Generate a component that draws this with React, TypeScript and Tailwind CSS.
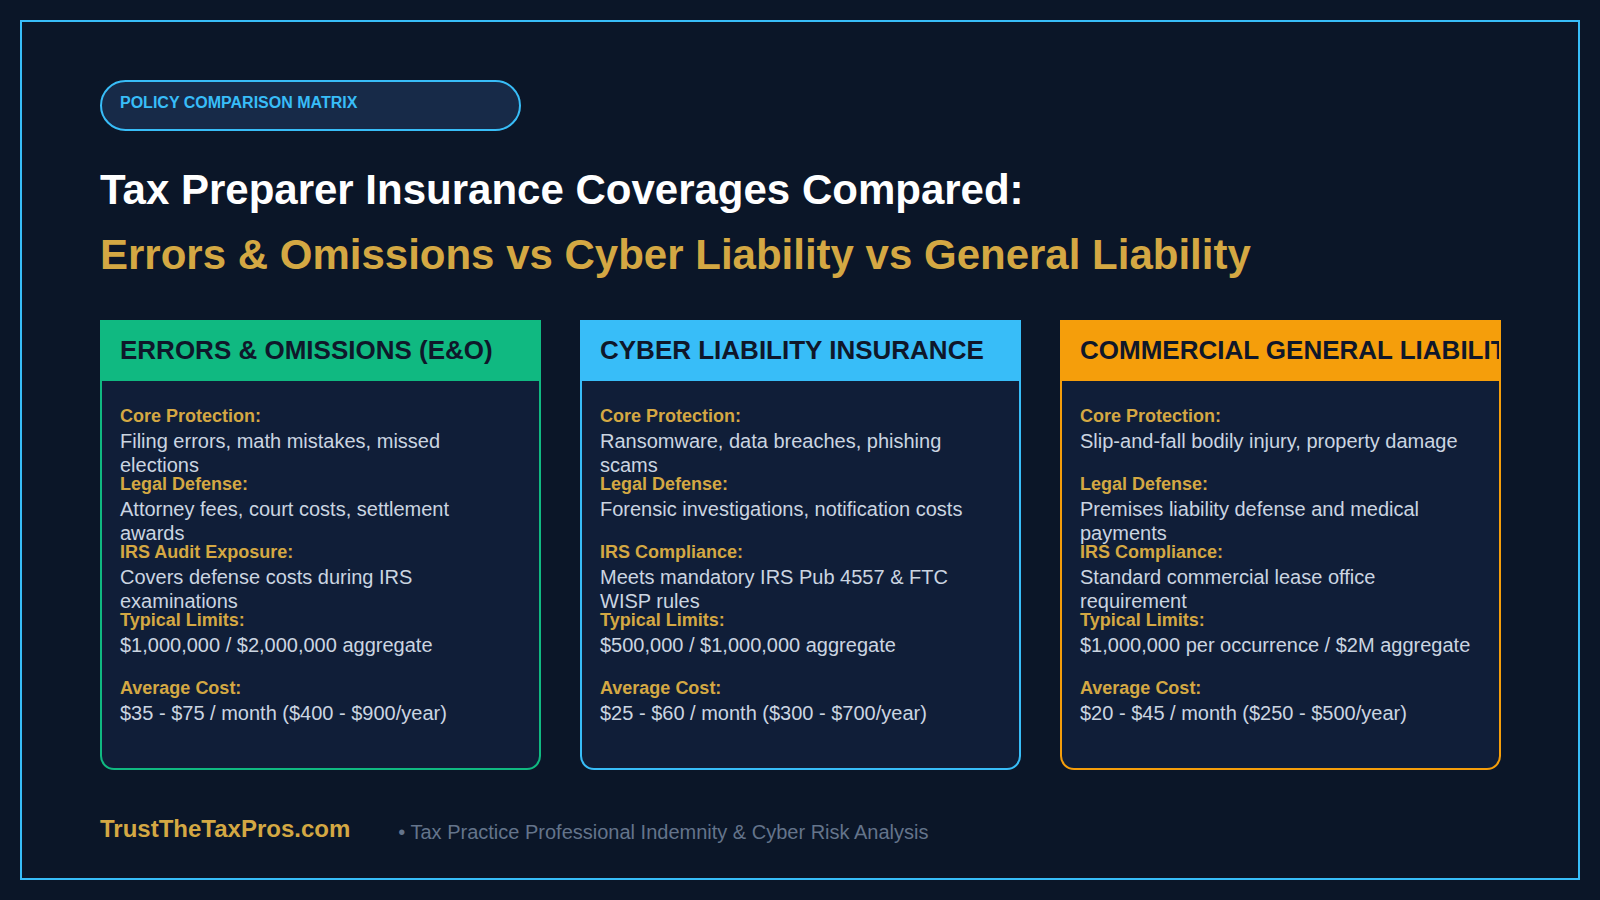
const cards = [
  {
    title: "ERRORS & OMISSIONS (E&O)",
    accent: "border-[#10b981]",
    head: "bg-[#10b981]",
    rows: [
      ["Core Protection:", "Filing errors, math mistakes, missed elections"],
      ["Legal Defense:", "Attorney fees, court costs, settlement awards"],
      ["IRS Audit Exposure:", "Covers defense costs during IRS examinations"],
      ["Typical Limits:", "$1,000,000 / $2,000,000 aggregate"],
      ["Average Cost:", "$35 - $75 / month ($400 - $900/year)"],
    ],
  },
  {
    title: "CYBER LIABILITY INSURANCE",
    accent: "border-[#38bdf8]",
    head: "bg-[#38bdf8]",
    rows: [
      ["Core Protection:", "Ransomware, data breaches, phishing scams"],
      ["Legal Defense:", "Forensic investigations, notification costs"],
      ["IRS Compliance:", "Meets mandatory IRS Pub 4557 & FTC WISP rules"],
      ["Typical Limits:", "$500,000 / $1,000,000 aggregate"],
      ["Average Cost:", "$25 - $60 / month ($300 - $700/year)"],
    ],
  },
  {
    title: "COMMERCIAL GENERAL LIABILITY (CGL)",
    accent: "border-[#f59e0b]",
    head: "bg-[#f59e0b]",
    rows: [
      ["Core Protection:", "Slip-and-fall bodily injury, property damage"],
      ["Legal Defense:", "Premises liability defense and medical payments"],
      ["IRS Compliance:", "Standard commercial lease office requirement"],
      ["Typical Limits:", "$1,000,000 per occurrence / $2M aggregate"],
      ["Average Cost:", "$20 - $45 / month ($250 - $500/year)"],
    ],
  },
];

function PolicyCard({ card }: { card: (typeof cards)[number] }) {
  return (
    <div className={`flex flex-col border-2 ${card.accent} rounded-b-[14px] bg-[#101e38]`}>
      <div className={`${card.head} flex h-[59px] items-center overflow-hidden pb-[2px] pl-[18px]`}>
        <h3 className="whitespace-nowrap text-[26px] font-bold text-[#0f172a]">{card.title}</h3>
      </div>
      <div className="pl-[18px] pr-[22px] pt-[23px] pb-[24px]">
        {card.rows.map(([label, value]) => (
          <div key={label} className="h-[68px]">
            <div className="text-[18px] font-bold leading-[24px] text-[#d4a843]">{label}</div>
            <div className="mt-px text-[20px] leading-[24px] text-[#cbd5e1]">{value}</div>
          </div>
        ))}
      </div>
    </div>
  );
}

export default function App() {
  return (
    <div className="h-[900px] w-[1600px] bg-[#0b1628] p-[20px] font-['Liberation_Sans',Arial,sans-serif]">
      <div className="h-full border-2 border-[#38bdf8] pl-[78px] pt-[58px]">
        <div className="h-[51px] w-[421px] rounded-full border-2 border-[#38bdf8] bg-[#172a48] pl-[18px] pt-[9px]">
          <span className="text-[16px] font-bold leading-[24px] text-[#38bdf8]">
            POLICY COMPARISON MATRIX
          </span>
        </div>

        <h1 className="mt-[34px] text-[42px] font-bold leading-[50px] text-white">
          Tax Preparer Insurance Coverages Compared:
        </h1>
        <h2 className="mt-[15px] text-[42px] font-bold leading-[50px] text-[#d4a843]">
          Errors &amp; Omissions vs Cyber Liability vs General Liability
        </h2>

        <div className="mt-[40px] grid w-[1401px] grid-cols-3 gap-[39px]">
          {cards.map((c) => (
            <PolicyCard key={c.title} card={c} />
          ))}
        </div>

        <div className="mt-[41px] flex items-center gap-[48px]">
          <span className="text-[24px] font-bold text-[#d4a843]">TrustTheTaxPros.com</span>
          <span className="mt-[5px] text-[20px] text-[#64748b]">
            • Tax Practice Professional Indemnity &amp; Cyber Risk Analysis
          </span>
        </div>
      </div>
    </div>
  );
}
